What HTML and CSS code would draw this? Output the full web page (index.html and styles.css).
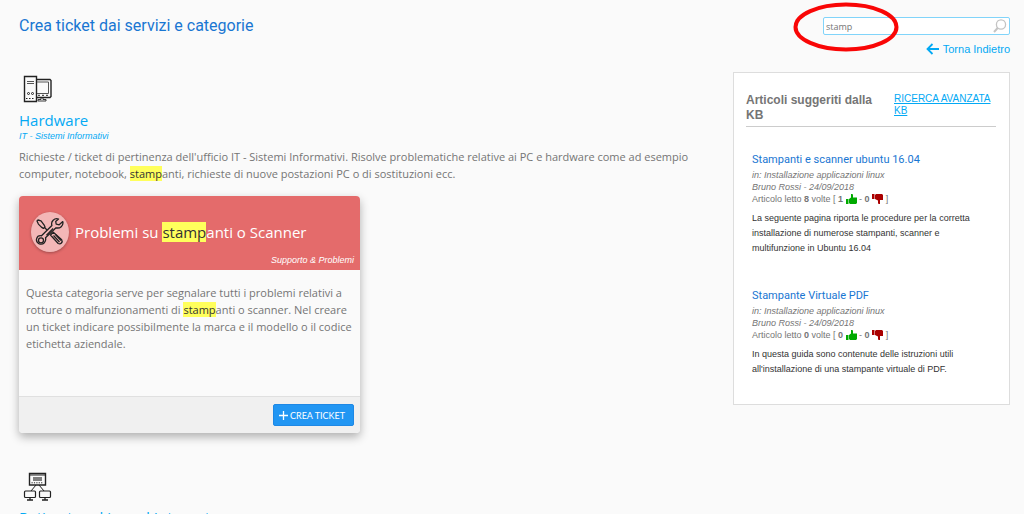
FILE: index.html
```html
<!DOCTYPE html>
<html lang="it">
<head>
<meta charset="utf-8">
<title>Crea ticket dai servizi e categorie</title>
<link rel="stylesheet" href="styles.css">
</head>
<body>
<header class="page-header">
	<h1 class="page-title">Crea ticket dai servizi e categorie</h1>
	<div class="header-tools">
		<form class="search" action="#">
			<input class="search-input" type="text" name="q" value="stamp" aria-label="Cerca">
			<button class="search-button" type="button" aria-label="Avvia ricerca">
				<svg width="14" height="14" viewBox="0 0 14 14" fill="none" stroke="#c4c4c4"><circle cx="8" cy="5.5" r="4.6" stroke-width="1.3"/><path d="M4.7 9 1 13" stroke-width="2"/></svg>
			</button>
			<svg class="search-mark" width="108" height="54" viewBox="0 0 108 54" fill="none"><ellipse cx="54" cy="27" rx="50.5" ry="22.5" stroke="#f90606" stroke-width="4"/></svg>
		</form>
		<a class="back-link" href="#">
			<svg width="13" height="12" viewBox="0 0 13 12" fill="none" stroke="#03a9f4" stroke-width="1.8"><path d="M13 6H1.5M6.5 1 1.5 6l5 5"/></svg>
			Torna Indietro
		</a>
	</div>
</header>

<div class="columns">
	<main class="services">
		<section class="service">
			<svg class="service-icon" width="36" height="32" viewBox="0 0 36 32" fill="none" stroke="#222">
				<path d="M5.5 4.5h12v25h-12z" stroke-width="1.4"/>
				<path d="M8 9.5h7M8 11.5h7" stroke="#555"/>
				<circle cx="9.5" cy="21.5" r="1"/><circle cx="13.5" cy="21.5" r="1"/>
				<path d="M7 26.5h9" stroke-dasharray="1.5 1.5"/>
				<path d="M18 7.5h13l1 1v16l-1 1H18" stroke-width="1.4"/>
				<path d="M18 10h11.5v11.5H18" stroke="#555"/>
				<path d="M19 23.3h11" stroke-dasharray="2 2"/>
				<path d="M22 25.5v2h-3V29h8v-1.5h-3v-2" stroke-width=".9"/>
			</svg>
			<h2 class="service-title"><a href="#">Hardware</a></h2>
			<p class="service-group">IT - Sistemi Informativi</p>
			<p class="service-text">Richieste / ticket di pertinenza dell'ufficio IT - Sistemi Informativi. Risolve problematiche relative ai PC e hardware come ad esempio computer, notebook, <mark>stamp</mark>anti, richieste di nuove postazioni PC o di sostituzioni ecc.</p>

			<article class="card">
				<div class="card-head">
					<div class="card-title-row">
						<span class="card-icon">
							<svg width="30" height="30" viewBox="0 0 30 30" fill="none" stroke="#222" stroke-width="1.3" stroke-linejoin="round">
								<path d="m3 3 3 .8 3 4 1 2.3-1.6 1.3-2-1.3-3-3L2 4zM9.5 10.5l5 5"/>
								<path d="m15.5 18 2.8-2.8 8.4 7.6c1.4 2.4-1 5-3.5 3.7z"/>
								<path d="m18.5 18.5 6 6.5M20.5 17.5l5.5 6"/>
								<path d="M23.5 2c-4-1.3-8 2.3-6.6 6.5L6.5 18.8c-5.2-.8-7 5.8-2.2 8 4.1 1.4 7.2-2.2 6.2-6.1L21 10.8c4 1 7.7-2 6.8-6.2l-3.6 3.2-3-.6-.5-2.7z" fill="#f3b7b7"/>
								<circle cx="6" cy="23.3" r="2.5"/>
								<path d="m11.5 18.2 6.6-6.7"/>
							</svg>
						</span>
						<h3 class="card-title">Problemi su <mark>stamp</mark>anti o Scanner</h3>
					</div>
					<p class="card-type">Supporto &amp; Problemi</p>
				</div>
				<p class="card-text">Questa categoria serve per segnalare tutti i problemi relativi a rotture o malfunzionamenti di <mark>stamp</mark>anti o scanner. Nel creare un ticket indicare possibilmente la marca e il modello o il codice etichetta aziendale.</p>
				<div class="card-foot">
					<button class="create-button" type="button">
						<svg width="9" height="9" viewBox="0 0 9 9" stroke="#fff" stroke-width="1.3"><path d="M4.5 0v9M0 4.5h9"/></svg>
						CREA TICKET
					</button>
				</div>
			</article>
		</section>

		<section class="service">
			<svg class="service-icon" width="36" height="32" viewBox="0 0 36 32" fill="none" stroke="#222">
				<path d="M10.5 4.5h16V16h-16z" stroke-width="1.4"/>
				<path d="M10.5 6h16"/>
				<path d="M14 9h9M14 11h9" stroke="#555" stroke-width="1.3"/>
				<path d="M12.5 13.8h12" stroke-dasharray="1.2 1.2"/>
				<path d="m17 16-5 6M20 16l5 6"/>
				<rect x="5.5" y="22" width="11" height="6.5" rx="1" stroke-width="1.2"/>
				<rect x="20.5" y="22" width="11" height="6.5" rx="1" stroke-width="1.2"/>
				<path d="M11 28v2.5M8 31h6M26 28v2.5M23 31h6" stroke-width="1.3"/>
			</svg>
			<h2 class="service-title"><a href="#">Reti networking ed Internet</a></h2>
		</section>
	</main>

	<aside class="kb">
		<div class="kb-head">
			<h2 class="kb-title">Articoli suggeriti dalla KB</h2>
			<a class="kb-link" href="#">RICERCA AVANZATA KB</a>
		</div>
		<article class="kb-item">
			<h3 class="kb-item-title"><a href="#">Stampanti e scanner ubuntu 16.04</a></h3>
			<p class="kb-meta"><i>in: Installazione applicazioni linux</i></p>
			<p class="kb-meta"><i>Bruno Rossi - 24/09/2018</i></p>
			<p class="kb-meta">Articolo letto <b>8</b> volte [ <b>1</b> <svg class="thumb" width="11" height="10" viewBox="0 0 11 10" fill="#0a0"><path d="M0 5h2.5v5H0zM3 5l2-1.5V0h1.5L7 1v2.5h4V9l-1 1H4L3 9z"/></svg> - <b>0</b> <svg class="thumb" width="11" height="10" viewBox="0 0 11 10" fill="#a00"><path d="M0 0h2.5v5H0zM3 1l1-1h6l1 1v5H8v4H6.5L6 9V6.5L3 5z"/></svg> ]</p>
			<p class="kb-text">La seguente pagina riporta le procedure per la corretta installazione di numerose stampanti, scanner e multifunzione in Ubuntu 16.04</p>
		</article>
		<article class="kb-item">
			<h3 class="kb-item-title"><a href="#">Stampante Virtuale PDF</a></h3>
			<p class="kb-meta"><i>in: Installazione applicazioni linux</i></p>
			<p class="kb-meta"><i>Bruno Rossi - 24/09/2018</i></p>
			<p class="kb-meta">Articolo letto <b>0</b> volte [ <b>0</b> <svg class="thumb" width="11" height="10" viewBox="0 0 11 10" fill="#0a0"><path d="M0 5h2.5v5H0zM3 5l2-1.5V0h1.5L7 1v2.5h4V9l-1 1H4L3 9z"/></svg> - <b>0</b> <svg class="thumb" width="11" height="10" viewBox="0 0 11 10" fill="#a00"><path d="M0 0h2.5v5H0zM3 1l1-1h6l1 1v5H8v4H6.5L6 9V6.5L3 5z"/></svg> ]</p>
			<p class="kb-text">In questa guida sono contenute delle istruzioni utili all'installazione di una stampante virtuale di PDF.</p>
		</article>
	</aside>
</div>
</body>
</html>
```
FILE: styles.css
```css
* {
	box-sizing: border-box;
}
body {
	margin: 0;
	padding: 0 14px 0 19px;
	background: #fafafa;
	color: #757575;
	font-family: "Liberation Sans", Arial, sans-serif;
	font-size: 9px;
}
h1, h2, h3, p {
	margin: 0;
	font-weight: normal;
}
a {
	color: #03a9f4;
	text-decoration: none;
}
mark {
	background: #ffff5c;
	color: #333;
}

/* header */
.page-header {
	display: flex;
	justify-content: space-between;
	padding-top: 14px;
}
.page-title {
	color: #1976d2;
	font-family: Roboto, sans-serif;
	font-size: 16px;
	line-height: 24px;
}
.header-tools {
	display: flex;
	flex-direction: column;
	align-items: flex-end;
	gap: 7px;
	padding-top: 3px;
}
.search {
	position: relative;
	display: flex;
	width: 187px;
	height: 18px;
	border: 1px solid #81d4fa;
	border-radius: 2px;
	background: #fff;
}
.search-input {
	flex: 1;
	min-width: 0;
	padding: 0 2px;
	border: 0;
	background: none;
	color: #757575;
	font: 9px "Open Sans", sans-serif;
}
.search-button {
	display: flex;
	align-items: center;
	padding: 0 2px;
	border: 0;
	background: none;
}
/* red ring drawn over the search term */
.search-mark {
	position: absolute;
	top: -18px;
	left: -32px;
	pointer-events: none;
}
.back-link {
	display: flex;
	align-items: center;
	gap: 4px;
	font-size: 11px;
	line-height: 14px;
}

/* layout */
.columns {
	display: flex;
	align-items: flex-start;
	gap: 36px;
	padding-top: 16px;
}
.services {
	flex: 1;
	min-width: 0;
}

/* services */
.service {
	margin-bottom: 36px;
}
.service-icon {
	display: block;
}
.service-title {
	padding-top: 5px;
	font-family: "Open Sans", sans-serif;
	font-size: 15px;
	line-height: 22px;
}
.service-group {
	color: #03a9f4;
	font-style: italic;
	line-height: 11px;
}
.service-text {
	padding: 6px 0 14px;
	font-family: "Open Sans", sans-serif;
	font-size: 11px;
	line-height: 17px;
}

/* card */
.card {
	width: 341px;
	max-width: 100%;
	border-radius: 4px;
	box-shadow: 0 4px 10px rgba(0, 0, 0, .3);
	overflow: hidden;
}
.card-head {
	padding: 16px 6px 4px 12px;
	background: #e46b6b;
	color: #fff;
}
.card-title-row {
	display: flex;
	align-items: center;
	gap: 6px;
}
.card-icon {
	display: flex;
	align-items: center;
	justify-content: center;
	width: 38px;
	height: 40px;
	border-radius: 50%;
	background: #f3b7b7;
	box-shadow: 0 1px 3px rgba(0, 0, 0, .3);
}
.card-title {
	font-family: "Open Sans", sans-serif;
	font-size: 15px;
	line-height: 22px;
}
.card-type {
	padding-top: 2px;
	font-style: italic;
	line-height: 12px;
	text-align: right;
}
.card-text {
	min-height: 126px;
	padding: 14px 4px 14px 7px;
	font-family: "Open Sans", sans-serif;
	font-size: 11px;
	line-height: 17px;
}
.card-foot {
	display: flex;
	justify-content: flex-end;
	padding: 7px 6px;
	border-top: 1px solid #e0e0e0;
	background: #f0f0f0;
}
.create-button {
	display: flex;
	align-items: center;
	gap: 2px;
	height: 22px;
	padding: 0 8px 0 5px;
	border: 1px solid #1e88e5;
	border-radius: 2px;
	background: #2196f3;
	color: #fff;
	font: 9px Lato, sans-serif;
}

/* knowledge base */
.kb {
	width: 277px;
	padding: 20px 13px 20px 12px;
	border: 1px solid #ddd;
	background: #fff;
}
.kb-head {
	display: flex;
	gap: 8px;
	padding-bottom: 3px;
	border-bottom: 1px solid #ccc;
}
.kb-title {
	width: 140px;
	font-size: 12px;
	font-weight: bold;
	line-height: 15px;
}
.kb-link {
	flex: 1;
	font-size: 10px;
	line-height: 12px;
	text-decoration: underline;
}
.kb-item {
	padding: 24px 6px 7px;
}
.kb-item-title {
	font-family: Roboto, sans-serif;
	font-size: 11px;
	line-height: 18px;
}
.kb-item-title a {
	color: #1976d2;
}
.kb-meta {
	line-height: 12px;
}
.thumb {
	vertical-align: -2px;
}
.kb-text {
	padding-top: 6px;
	color: #333;
	line-height: 15px;
}
```
